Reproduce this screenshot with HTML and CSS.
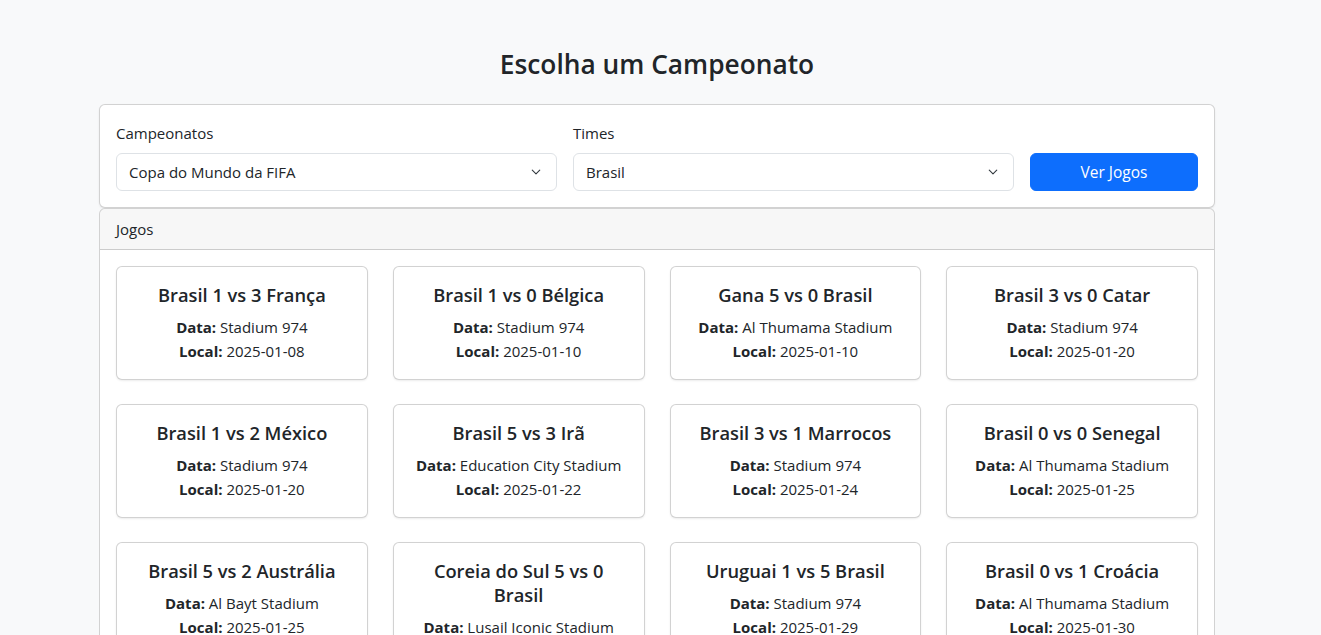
FILE: index.html
```html
<!DOCTYPE html>
<html lang="pt-BR">
<head>
<meta charset="utf-8">
<title>Escolha um Campeonato</title>
<link rel="stylesheet" href="styles.css">
</head>
<body>
<div class="container">
  <h2 class="page-title">Escolha um Campeonato</h2>

  <div class="card form-card">
    <div class="form-row">
      <div class="col-wide">
        <label class="form-label" for="camp">Campeonatos</label>
        <select id="camp" class="form-select">
          <option>Copa do Mundo da FIFA</option>
        </select>
      </div>
      <div class="col-wide">
        <label class="form-label" for="time">Times</label>
        <select id="time" class="form-select">
          <option>Brasil</option>
        </select>
      </div>
      <div class="col-narrow">
        <button class="btn-primary" type="button">Ver Jogos</button>
      </div>
    </div>
  </div>

  <div class="card games-card">
    <div class="card-header">Jogos</div>
    <div class="games-body">
      <div class="games-grid">
        <div class="game"><h5 class="game-title">Brasil 1 vs 3 França</h5><p class="game-info"><strong>Data:</strong> Stadium 974</p><p class="game-info"><strong>Local:</strong> 2025-01-08</p></div>
        <div class="game"><h5 class="game-title">Brasil 1 vs 0 Bélgica</h5><p class="game-info"><strong>Data:</strong> Stadium 974</p><p class="game-info"><strong>Local:</strong> 2025-01-10</p></div>
        <div class="game"><h5 class="game-title">Gana 5 vs 0 Brasil</h5><p class="game-info"><strong>Data:</strong> Al Thumama Stadium</p><p class="game-info"><strong>Local:</strong> 2025-01-10</p></div>
        <div class="game"><h5 class="game-title">Brasil 3 vs 0 Catar</h5><p class="game-info"><strong>Data:</strong> Stadium 974</p><p class="game-info"><strong>Local:</strong> 2025-01-20</p></div>
        <div class="game"><h5 class="game-title">Brasil 1 vs 2 México</h5><p class="game-info"><strong>Data:</strong> Stadium 974</p><p class="game-info"><strong>Local:</strong> 2025-01-20</p></div>
        <div class="game"><h5 class="game-title">Brasil 5 vs 3 Irã</h5><p class="game-info"><strong>Data:</strong> Education City Stadium</p><p class="game-info"><strong>Local:</strong> 2025-01-22</p></div>
        <div class="game"><h5 class="game-title">Brasil 3 vs 1 Marrocos</h5><p class="game-info"><strong>Data:</strong> Stadium 974</p><p class="game-info"><strong>Local:</strong> 2025-01-24</p></div>
        <div class="game"><h5 class="game-title">Brasil 0 vs 0 Senegal</h5><p class="game-info"><strong>Data:</strong> Al Thumama Stadium</p><p class="game-info"><strong>Local:</strong> 2025-01-25</p></div>
        <div class="game"><h5 class="game-title">Brasil 5 vs 2 Austrália</h5><p class="game-info"><strong>Data:</strong> Al Bayt Stadium</p><p class="game-info"><strong>Local:</strong> 2025-01-25</p></div>
        <div class="game"><h5 class="game-title">Coreia do Sul 5 vs 0 Brasil</h5><p class="game-info"><strong>Data:</strong> Lusail Iconic Stadium</p><p class="game-info"><strong>Local:</strong> 2025-01-27</p></div>
        <div class="game"><h5 class="game-title">Uruguai 1 vs 5 Brasil</h5><p class="game-info"><strong>Data:</strong> Stadium 974</p><p class="game-info"><strong>Local:</strong> 2025-01-29</p></div>
        <div class="game"><h5 class="game-title">Brasil 0 vs 1 Croácia</h5><p class="game-info"><strong>Data:</strong> Al Thumama Stadium</p><p class="game-info"><strong>Local:</strong> 2025-01-30</p></div>
      </div>
    </div>
  </div>
</div>
</body>
</html>
```

FILE: styles.css
```css
* { box-sizing: border-box; }

html, body {
  margin: 0;
  background: #f8f9fa;
}

body {
  font-family: "Open Sans", "Noto Sans", "Liberation Sans", sans-serif;
  font-size: 16px;
  line-height: 1.5;
  color: #212529;
  padding-right: 7px;
}

.container {
  width: 1116px;
  margin: 0 auto;
}

.page-title {
  margin: 48px 0 22px;
  font-size: 26.3px;
  line-height: 33.6px;
  font-weight: 600;
  text-align: center;
}

.card {
  background: #fff;
  border: 1px solid rgba(0, 0, 0, 0.175);
  border-radius: 6px;
}

.form-card {
  padding: 16px;
  box-shadow: 0 1px 2px rgba(0, 0, 0, 0.075);
}

.form-row {
  display: grid;
  grid-template-columns: 441px 441px 1fr;
  column-gap: 16px;
  align-items: end;
}

.form-label {
  display: block;
  margin-bottom: 8px;
  font-size: 15px;
  line-height: 24px;
}

.form-select {
  display: block;
  width: 100%;
  height: 38px;
  padding: 6px 36px 6px 12px;
  font-family: inherit;
  font-size: 15px;
  color: #212529;
  background-color: #fff;
  background-image: url("data:image/svg+xml,%3csvg xmlns='http://www.w3.org/2000/svg' viewBox='0 0 16 16'%3e%3cpath fill='none' stroke='%23343a40' stroke-linecap='round' stroke-linejoin='round' stroke-width='1.5' d='m3 5.5 5 5 5-5'/%3e%3c/svg%3e");
  background-repeat: no-repeat;
  background-position: right 12px center;
  background-size: 16px 12px;
  border: 1px solid #dee2e6;
  border-radius: 6px;
  appearance: none;
  -webkit-appearance: none;
}

.btn-primary {
  display: block;
  width: 100%;
  height: 38px;
  font-family: inherit;
  font-size: 15.5px;
  color: #fff;
  background: #0d6efd;
  border: 1px solid #0d6efd;
  border-radius: 6px;
}

.card-header {
  padding: 8px 16px;
  font-size: 15px;
  line-height: 24px;
  background: rgba(0, 0, 0, 0.03);
  border-bottom: 1px solid rgba(0, 0, 0, 0.175);
  border-radius: 5px 5px 0 0;
}

.games-body {
  padding: 16px;
}

.games-grid {
  display: grid;
  grid-template-columns: repeat(4, 1fr);
  column-gap: 25px;
  row-gap: 24px;
}

.game {
  padding: 16px;
  text-align: center;
  background: #fff;
  border: 1px solid rgba(0, 0, 0, 0.175);
  border-radius: 6px;
  box-shadow: 0 1px 2px rgba(0, 0, 0, 0.075);
}

.game-title {
  margin: 0 0 8px;
  font-size: 18.3px;
  line-height: 24px;
  font-weight: 600;
}

.game-info {
  margin: 0;
  font-size: 15px;
  line-height: 24px;
}

.game-info strong {
  font-weight: 700;
}
```
